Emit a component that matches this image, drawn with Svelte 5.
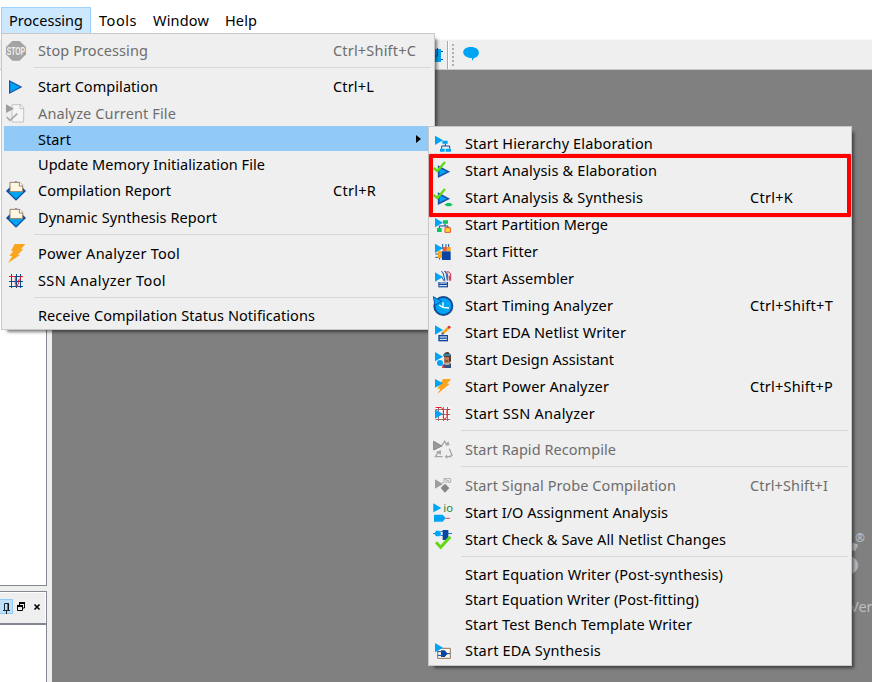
<script>
  const menus = [
    { label: 'Processing', w: 74, on: true },
    { label: 'Tools', w: 38 },
    { label: 'Window', w: 56 },
    { label: 'Help', w: 32 }
  ];
  const processing = [
    { label: 'Stop Processing', w: 110, key: 'Ctrl+Shift+C', kw: 83, icon: 'stop', off: true },
    { sep: true },
    { label: 'Start Compilation', w: 120, key: 'Ctrl+L', kw: 41, icon: 'play' },
    { label: 'Analyze Current File', w: 138, icon: 'file', off: true },
    { label: 'Start', w: 33, sub: true },
    { label: 'Update Memory Initialization File', w: 227 },
    { label: 'Compilation Report', w: 133, key: 'Ctrl+R', kw: 43, icon: 'report' },
    { label: 'Dynamic Synthesis Report', w: 179, icon: 'report' },
    { sep: true },
    { label: 'Power Analyzer Tool', w: 142, icon: 'bolt' },
    { label: 'SSN Analyzer Tool', w: 128, icon: 'grid' },
    { sep: true },
    { label: 'Receive Compilation Status Notifications', w: 277 }
  ];
  const start = [
    { label: 'Start Hierarchy Elaboration', w: 188, icon: 'tree' },
    { label: 'Start Analysis & Elaboration', w: 192, icon: 'check' },
    { label: 'Start Analysis & Synthesis', w: 178, key: 'Ctrl+K', kw: 43, icon: 'synth' },
    { label: 'Start Partition Merge', w: 143, icon: 'merge' },
    { label: 'Start Fitter', w: 73, icon: 'fitter' },
    { label: 'Start Assembler', w: 109, icon: 'assembler' },
    { label: 'Start Timing Analyzer', w: 148, key: 'Ctrl+Shift+T', kw: 83, icon: 'clock' },
    { label: 'Start EDA Netlist Writer', w: 161, icon: 'netlist' },
    { label: 'Start Design Assistant', w: 149, icon: 'assistant' },
    { label: 'Start Power Analyzer', w: 144, key: 'Ctrl+Shift+P', kw: 83, icon: 'power' },
    { label: 'Start SSN Analyzer', w: 130, icon: 'ssn' },
    { sep: true },
    { label: 'Start Rapid Recompile', w: 151, icon: 'recycle', off: true },
    { sep: true },
    { label: 'Start Signal Probe Compilation', w: 211, key: 'Ctrl+Shift+I', kw: 78, icon: 'probe', off: true },
    { label: 'Start I/O Assignment Analysis', w: 203, icon: 'io' },
    { label: 'Start Check & Save All Netlist Changes', w: 261, icon: 'save' },
    { sep: true },
    { label: 'Start Equation Writer (Post-synthesis)', w: 258 },
    { label: 'Start Equation Writer (Post-fitting)', w: 234 },
    { label: 'Start Test Bench Template Writer', w: 227 },
    { label: 'Start EDA Synthesis', w: 136, icon: 'eda' }
  ];

  // spreads the letters so that a label has the given width
  function fit(node, width) {
    const natural = node.getBoundingClientRect().width;
    node.style.letterSpacing = (width - natural) / node.textContent.length + 'px';
  }
</script>

{#snippet icon(name)}
  <svg class="icon" viewBox="0 0 72 72" width="24" height="24">
    {#if name === 'stop'}
      <path d="M25 9h22l19 18v22L47 68H25L6 49V27z" fill="#a3a3a3" />
      <g transform="translate(8 52) scale(.72 1.250)">
        <text font-size="28" font-weight="bold" textLength="77" lengthAdjust="spacingAndGlyphs" fill="#efefef" font-family="Liberation Sans, sans-serif">STOP</text>
      </g>
    {:else if name === 'play'}
      <path d="M17 21v36l34-18z" fill="#00a4f5" stroke="#1b55ab" stroke-width="4" />
    {:else if name === 'file'}
      <path d="M24 11h27l8 9v43H24z" fill="#f5f5f5" stroke="#c4c4c4" stroke-width="3" />
      <path d="M48 11v12h11" fill="none" stroke="#c4c4c4" stroke-width="3" />
      <path d="M6 10v26l24-13z" fill="#9c9c9c" />
      <path d="M8 48l10 10 22-20" fill="none" stroke="#a8a8a8" stroke-width="5" />
    {:else if name === 'report'}
      <path d="M36 9l30 30-30 29L6 39z" fill="#0c4a9a" />
      <path d="M13 41h46L36 63z" fill="#00a4f5" />
      <path d="M18 13h29l9 9v19H18z" fill="#fff8e0" stroke="#9a806c" stroke-width="3" />
      <path d="M46 12v12h11" fill="#fff" stroke="#9a806c" stroke-width="3" />
    {:else if name === 'bolt'}
      <path d="M32 9h32L51 25h7L41 41h8L12 66l13-21h-9l12-15h-7z" fill="#fba51e" />
    {:else if name === 'grid'}
      <path d="M15 25.500h42M15 40.500h42M15 55.500h42M22.500 18v42M37.500 18v42M49.500 18v42" stroke="#064d93" stroke-width="3" />
      <path d="M15 25.500h16l3 3v21l4 6 5-8V36h6V25.500h8" fill="none" stroke="#ec1c2e" stroke-width="3" />
    {:else if name === 'tree'}
      <path d="M12 14v28l24-14z" fill="#00a4f5" />
      <path d="M43 36v9M32 53v-8h24v8" fill="none" stroke="#064d93" stroke-width="3" />
      <path d="M34 29h16v9H34zM27 53h14v9H27zM44 53h16v9H44z" fill="#00a4f5" />
    {:else if name === 'check' || name === 'synth'}
      <path d="M23 26v30l29-15z" fill="#00a4f5" stroke="#1b55ab" stroke-width="5" />
      <path d="M8 30l11 9L42 12" fill="none" stroke="#63d916" stroke-width="7" />
      {#if name === 'synth'}
        <path d="M41 59h23" stroke="#168f5d" stroke-width="3" />
        <path d="M47 54h12l3 5-3 5H47l-3-5z" fill="#0cc65b" />
      {/if}
    {:else if name === 'merge'}
      <path d="M42 34v8M25 49v-7h26v8" fill="none" stroke="#064d93" stroke-width="3" />
      <path d="M12 18v28l24-14z" fill="#00a4f5" />
      <path d="M36 25h15v10H36zM18 48h14v12H18z" fill="#0cc65b" />
      <path d="M42 47h16v14H42z" fill="#ffd83b" stroke="#e9511d" stroke-width="3" />
    {:else if name === 'fitter'}
      <path d="M26 39v23M35 15v15M45 15v15M53 15v15M13 45h20M13 55h20" stroke="#1453a0" stroke-width="3" />
      <path d="M21 36h12v21H21zM47 24h12v13H47z" fill="#fba51e" />
      <path d="M35 24h12v13H35z" fill="#f05a32" />
      <path d="M33 37h26v26H33z" fill="#0a45a1" />
      <path d="M12 14v28l24-14z" fill="#00a4f5" />
    {:else if name === 'assembler'}
      <path d="M31 16q4 0 6 8l5 20M40 16q4 0 6 8l3 20M31 31l9 15" fill="none" stroke="#1453a0" stroke-width="3" />
      <path d="M42 16q4 0 8 6v18M49 16q7 2 10 8v20M55 29v15" fill="none" stroke="#c32945" stroke-width="3" />
      <path d="M22 48h29v16H22z" fill="#0a45a1" /><path d="M25 51h23M25 59h23" stroke="#fff" stroke-width="3" />
      <path d="M12 19v28l24-14z" fill="#00a4f5" />
    {:else if name === 'clock'}
      <circle cx="37" cy="39" r="27" fill="#00a4f5" stroke="#164a91" stroke-width="6" />
      <path d="M7 11l25 14L12 37z" fill="#00a4f5" stroke="#1658a8" stroke-width="3" />
      <path d="M36 28v15l18 2M36 43l-12-7" fill="none" stroke="#fff" stroke-width="4" />
    {:else if name === 'netlist'}
      <path d="M22 45h29v19H22z" fill="#0a45a1" /><path d="M26 51h22M26 58h22" stroke="#fff" stroke-width="3" />
      <path d="M12 16v28l24-14z" fill="#00a4f5" />
      <path d="M36 39l18-17" stroke="#fba51e" stroke-width="8" /><path d="M52 24l5-5" stroke="#e5282f" stroke-width="8" />
      <path d="M31 44l2-8 7 6z" fill="#5e493b" />
    {:else if name === 'assistant'}
      <path d="M39 23h18v27H39z" fill="#b87958" />
      <path d="M36 25q6-12 16-10l8 9v6H40zM54 28h6v16h-6z" fill="#51413c" />
      <path d="M38 22h20v4H38z" fill="#29a6df" /><path d="M42 40h9v4h-9z" fill="#624333" />
      <path d="M37 52l15 1 8-5v15H34z" fill="#34537c" /><path d="M34 51l9 12h-9z" fill="#d93645" />
      <path d="M12 15v28l24-14z" fill="#00a4f5" /><circle cx="27" cy="48" r="9" fill="#00a4f5" />
    {:else if name === 'power'}
      <path d="M33 15h24L46 29h8L16 60l9-16h-9z" fill="#fba51e" transform="translate(3 0)" />
      <path d="M12 15v26l24-13z" fill="#00a4f5" />
    {:else if name === 'ssn'}
      <path d="M15 18h43v42H15z" fill="#fafafa" /><path d="M14 25.500h44M14 40.500h44M14 55.500h44M22.500 18v42M37.500 18v42M49.500 18v42" stroke="#a46c66" stroke-width="3" />
      <path d="M14 19.500h17l6 8v22l4 6 7-9V25.500h8" fill="none" stroke="#ed1c2d" stroke-width="3" />
      <path d="M12 25v28l24-14z" fill="#00a4f5" />
    {:else if name === 'recycle'}
      <path d="M30 29l11-16 8 13M55 35l8 20-9 4M43 59h18M24 43L13 59h22" fill="none" stroke="#a6a6a6" stroke-width="4" />
      <path d="M42 25h14l-4-12zM48 52l-6 7 7 8zM14 45l16-5v13z" fill="#a6a6a6" />
      <path d="M8 13v26l24-12z" fill="#9b9b9b" stroke="#858585" stroke-width="3" />
    {:else if name === 'probe'}
      <path d="M34 28.500h5V19h6v6M38 16.500h21v12h-6V22h-5v6.500h-4" fill="none" stroke="#b3b3b3" stroke-width="3" />
      <path d="M12 19v28l24-14z" fill="#9d9d9d" /><path d="M42 32l13 13-13 14-13-14z" fill="#858585" />
    {:else if name === 'io'}
      <path d="M7 10v27l24-13z" fill="#00a4f5" />
      <text x="37" y="35" font-size="30" textLength="29" lengthAdjust="spacingAndGlyphs" fill="#26843c">io</text>
      <path d="M9 44h26l9 10-9 11H9z" fill="#00a4f5" /><path d="M44 55h13" stroke="#e94545" stroke-width="3" />
    {:else if name === 'save'}
      <path d="M6 19.500h8M28 13.500h8M28 25.500h8M51 19.500h12" stroke="#1680d0" stroke-width="3" />
      <path d="M15 11h10l6 9-6 8H15l-5-8z" fill="#00a4f5" /><path d="M35 9h17v30H35z" fill="#0a45a1" />
      <path d="M15 46l14 15 29-32" fill="none" stroke="#63d916" stroke-width="9" />
    {:else if name === 'eda'}
      <path d="M20 31h38v30H20z" fill="#fff8e0" stroke="#92776a" stroke-width="3" />
      <path d="M20 41h14M20 52h14M46 47h11" stroke="#0a45a1" stroke-width="3" />
      <path d="M30 37h11l9 10-9 10H30z" fill="#0a45a1" /><path d="M12 15v28l24-14z" fill="#00a4f5" />
    {/if}
  </svg>
{/snippet}

{#snippet list(items)}
  {#each items as it}
    {#if it.sep}
      <div class="sep"></div>
    {:else}
      <div class="row" class:short={!it.icon} class:off={it.off} class:active={it.sub}>
        {@render icon(it.icon)}
        <div class="label"><span use:fit={it.w}>{it.label}</span></div>
        {#if it.key}<div class="key"><span use:fit={it.kw}>{it.key}</span></div>{/if}
        {#if it.sub}<svg class="arrow" width="5" height="8" viewBox="0 0 5 8"><path d="M0 0l5 4-5 4z" /></svg>{/if}
      </div>
    {/if}
  {/each}
{/snippet}

<div class="window">
  <header class="menubar">
    {#each menus as m}
      <div class="top" class:on={m.on}><span use:fit={m.w}>{m.label}</span></div>
    {/each}
  </header>
  <div class="toolbar">
    <svg width="500" height="30" viewBox="0 0 500 30">
      <path d="M432 9h9v13h-9z" fill="#00a4f5" /><path d="M437.500 8v8h-3v4M441 11.500h2M441 19.500h2" stroke="#064d93" fill="none" />
      <path d="M447.500 1v28" stroke="#aaa" /><path d="M448.500 1v28" stroke="#fff" />
      <path d="M453 4v22" stroke="#b0b0b0" stroke-width="2" stroke-dasharray="2 2" />
      <path d="M471 7c10 0 10 10 3 11l-2 3v-3c-11 0-12-11-1-11z" fill="#00a4f5" />
    </svg>
  </div>
  <div class="work">
    <aside>
      <div class="panel upper"></div>
      <div class="panel lower">
        <div class="title">
          <svg width="46" height="31" viewBox="0 0 46 31">
            <path d="M-1 7.500h13.500v14H-1z" fill="#bfe0f8" stroke="#91c9f7" />
            <path d="M4.500 18v-6.500h4V18M3 18.500h7M6.500 18v4" fill="none" stroke="#1c2a35" /><path d="M8 11v7" stroke="#000" />
            <path d="M19.500 14v-3h5v5h-2M17.500 14.500h5v4h-5z" fill="none" stroke="#000" /><path d="M19 11h6M17 14h6" stroke="#000" stroke-width="2" />
            <path d="M34.500 12.500l5 5M39.500 12.500l-5 5" stroke="#000" stroke-width="1.600" />
          </svg>
        </div>
      </div>
    </aside>
    <main></main>
  </div>
</div>

<div class="brand"><span class="ess">S</span><span class="reg">®</span><span class="ver">Ver</span></div>

<div class="menu first">{@render list(processing)}</div>
<div class="menu second">{@render list(start)}</div>
<div class="frame"></div>

<style>
  :global(body) { overflow: hidden; }
  .window, .menu, .brand { font-family: 'Noto Sans', 'Open Sans', sans-serif; font-size: 14.5px; color: #000; white-space: nowrap; }
  .window { width: 872px; height: 682px; display: flex; flex-direction: column; background: #efefef; overflow: hidden; }
  .menubar { height: 39px; flex: none; display: flex; align-items: flex-start; padding: 7px 0 0 1px; box-sizing: border-box; background: #fff; }
  .top { height: 27px; line-height: 25px; padding: 0 7px; border: 1px solid transparent; box-sizing: border-box; display: flex; }
  .on { background: #cce8ff; border-color: #99d1ff; }
  .top span, .label span, .key span { display: inline-block; }
  .toolbar { height: 31px; flex: none; box-sizing: border-box; border-top: 1px solid #f8f8f8; border-bottom: 1px solid #c8c8c8; background: #efefef; }
  .toolbar svg { display: block; }
  .work { flex: 1; display: flex; min-height: 0; }
  aside { width: 52px; display: flex; flex-direction: column; gap: 5px; }
  .panel { width: 47px; box-sizing: border-box; border-right: 1px solid #828790; background: #fff; }
  .upper { height: 516px; border-bottom: 1px solid #828790; }
  .lower { flex: 1; border-top: 1px solid #828790; }
  .title { height: 31px; border-bottom: 2px solid #828790; background: #efefef; box-shadow: inset -1px 1px #fff; }
  .title svg { display: block; }
  main { flex: 1; background: #808080; }
  .menu { position: absolute; box-sizing: border-box; padding: 2px; background: #efefef; border: 1px solid #c8c8c8; box-shadow: 4px 4px 3px -2px rgba(0, 0, 0, 0.5); }
  .first { left: 1px; top: 33px; width: 434px; height: 297px; --key: 295px; }
  .second { left: 428px; top: 126px; width: 424px; height: 540px; --key: 285px; }
  .row { height: 27px; display: flex; align-items: center; }
  .short { height: 25px; }
  .icon { flex: none; }
  .label, .key { line-height: 25px; padding-top: 2px; }
  .short .label { line-height: 23px; }
  .label { width: var(--key); margin-left: 10px; }
  .off { color: #6d6d6d; }
  .active { background: #91c9f7; }
  .arrow { margin-left: 83px; }
  .sep { height: 9px; margin: 0 1px 0 30px; background: linear-gradient(#d7d7d7, #d7d7d7) 0 4px / 100% 1px no-repeat; }
  .frame { position: absolute; left: 429px; top: 154px; width: 422px; height: 63px; box-sizing: border-box; border: 4px solid #f00; border-radius: 1px; box-shadow: 0 0 1px #f00; }
  .brand { position: absolute; left: 835px; top: 525px; width: 37px; height: 100px; overflow: hidden; color: #bcbcc4; }
  .brand span { position: absolute; line-height: 1; }
  .brand .ess { font-size: 43px; font-weight: bold; left: 0; top: 18px; line-height: 30px; -webkit-text-stroke: 1.500px #bcbcc4; }
  .brand .reg { font-size: 12px; left: 20px; top: 7px; line-height: 11px; font-weight: bold; }
  .brand .ver { font-size: 14.5px; left: 15px; top: 74px; }
</style>
